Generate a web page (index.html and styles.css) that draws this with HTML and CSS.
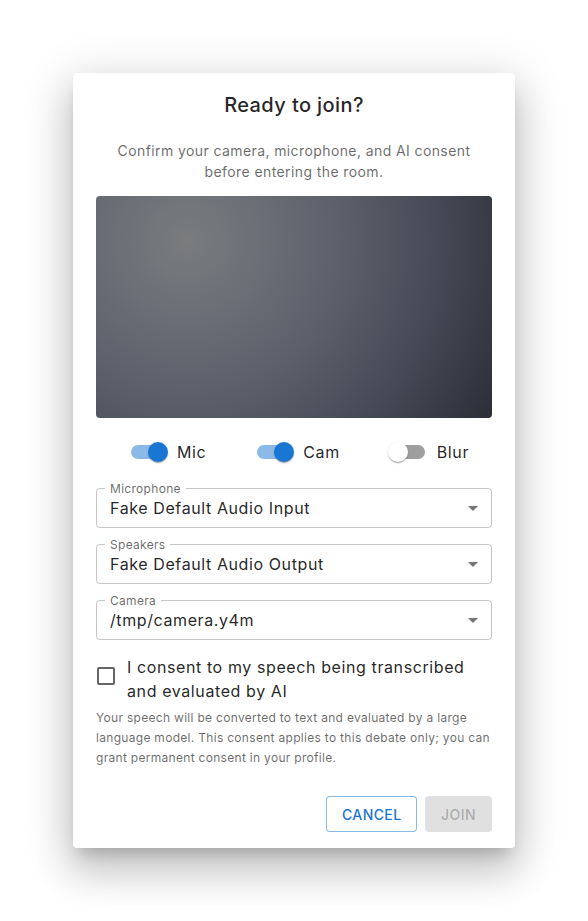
FILE: index.html
```html
<!DOCTYPE html>
<html lang="en">
<head>
<meta charset="utf-8">
<title>Ready to join?</title>
<link rel="stylesheet" href="styles.css">
</head>
<body>
<div class="page">
  <div class="dialog">
    <h2 class="title">Ready to join?</h2>
    <div class="content">
      <p class="subtitle">Confirm your camera, microphone, and AI consent before entering the room.</p>
      <div class="video"></div>
      <div class="toggles">
        <label class="toggle">
          <span class="switch on"><span class="track"></span><span class="thumb"></span></span>
          <span class="toggle-label">Mic</span>
        </label>
        <label class="toggle">
          <span class="switch on"><span class="track"></span><span class="thumb"></span></span>
          <span class="toggle-label">Cam</span>
        </label>
        <label class="toggle">
          <span class="switch"><span class="track"></span><span class="thumb"></span></span>
          <span class="toggle-label">Blur</span>
        </label>
      </div>
      <div class="fields">
        <div class="field">
          <span class="field-label">Microphone</span>
          <span class="field-value">Fake Default Audio Input</span>
          <svg class="arrow" width="10" height="5" viewBox="0 0 10 5"><path d="M0 0L5 5L10 0Z"/></svg>
        </div>
        <div class="field">
          <span class="field-label">Speakers</span>
          <span class="field-value">Fake Default Audio Output</span>
          <svg class="arrow" width="10" height="5" viewBox="0 0 10 5"><path d="M0 0L5 5L10 0Z"/></svg>
        </div>
        <div class="field">
          <span class="field-label">Camera</span>
          <span class="field-value">/tmp/camera.y4m</span>
          <svg class="arrow" width="10" height="5" viewBox="0 0 10 5"><path d="M0 0L5 5L10 0Z"/></svg>
        </div>
      </div>
      <label class="consent">
        <span class="checkbox"></span>
        <span class="consent-text">I consent to my speech being transcribed and evaluated by AI</span>
      </label>
      <p class="helper">Your speech will be converted to text and evaluated by a large language model. This consent applies to this debate only; you can grant permanent consent in your profile.</p>
    </div>
    <div class="actions">
      <button class="btn btn-outlined">Cancel</button>
      <button class="btn btn-disabled" disabled>Join</button>
    </div>
  </div>
</div>
</body>
</html>
```
FILE: styles.css
```css
* { box-sizing: border-box; }
html, body { margin: 0; padding: 0; background: #fff; }
body {
  font-family: "Inter", "Open Sans", sans-serif;
  color: rgba(0, 0, 0, 0.87);
}
.page {
  width: 588px;
  height: 921px;
  display: flex;
  align-items: center;
  justify-content: center;
}
.dialog {
  width: 442px;
  height: 775px;
  background: #fff;
  border-radius: 4px;
  box-shadow: 0 11px 15px -7px rgba(0,0,0,0.2), 0 24px 38px 3px rgba(0,0,0,0.14), 0 9px 46px 8px rgba(0,0,0,0.12);
  display: flex;
  flex-direction: column;
}
.title {
  margin: 0;
  padding: 16px 23px;
  font-size: 20px;
  line-height: 32px;
  font-weight: 500;
  letter-spacing: 0.4px;
  text-align: center;
}
.content {
  padding: 0 23px;
  flex: 1;
}
.subtitle {
  margin: 3px 0 14px;
  font-size: 14px;
  line-height: 21px;
  letter-spacing: 0.4px;
  color: rgba(0,0,0,0.6);
  text-align: center;
  padding: 0 6px;
}
.video {
  height: 222px;
  border-radius: 4px;
  background: radial-gradient(circle at 23% 20%, #7a7c7d 0%, #6a6e76 22%, #5a5f6a 45%, #454955 72%, #2b2e37 100%);
}
.toggles {
  height: 40px;
  margin-top: 14px;
  display: flex;
  align-items: center;
  padding-left: 32px;
}
.toggle {
  display: flex;
  align-items: center;
  gap: 9px;
  font-size: 16px;
  letter-spacing: 0.6px;
}
.toggle + .toggle { margin-left: 48px; }
.switch {
  position: relative;
  width: 40px;
  height: 20px;
  display: block;
}
.track {
  position: absolute;
  left: 3px;
  top: 3px;
  width: 34px;
  height: 14px;
  border-radius: 7px;
  background: #000;
  opacity: 0.38;
}
.thumb {
  position: absolute;
  left: 0;
  top: 0;
  width: 20px;
  height: 20px;
  border-radius: 50%;
  background: #fff;
  box-shadow: 0 2px 1px -1px rgba(0,0,0,0.2), 0 1px 1px 0 rgba(0,0,0,0.14), 0 1px 3px 0 rgba(0,0,0,0.12);
}
.switch.on .track { background: #1976d2; opacity: 0.5; }
.switch.on .thumb { left: 20px; background: #1976d2; }
.fields {
  margin-top: 16px;
  display: flex;
  flex-direction: column;
  gap: 16px;
}
.field {
  position: relative;
  height: 40px;
  border: 1px solid rgba(0,0,0,0.23);
  border-radius: 4px;
  display: flex;
  align-items: center;
  padding: 0 13px;
}
.field-label {
  position: absolute;
  left: 8px;
  top: -8px;
  padding: 0 5px;
  background: #fff;
  font-size: 12px;
  line-height: 15px;
  letter-spacing: 0.3px;
  color: rgba(0,0,0,0.6);
}
.field-value {
  flex: 1;
  font-size: 16px;
  line-height: 23px;
  letter-spacing: 0.6px;
}
.arrow { fill: rgba(0,0,0,0.54); display: block; }
.consent {
  margin-top: 15px;
  display: flex;
  align-items: flex-start;
  gap: 12px;
}
.checkbox {
  flex: none;
  width: 18px;
  height: 18px;
  margin: 12px 0 0 1px;
  border: 2px solid rgba(0,0,0,0.6);
  border-radius: 2px;
}
.consent-text {
  font-size: 16px;
  line-height: 24px;
  letter-spacing: 0.6px;
}
.helper {
  margin: 5px 0 0;
  font-size: 12px;
  line-height: 20px;
  letter-spacing: 0.3px;
  color: rgba(0,0,0,0.6);
}
.actions {
  padding: 0 23px 16px;
  display: flex;
  justify-content: flex-end;
  gap: 8px;
}
.btn {
  height: 36px;
  font-family: inherit;
  font-size: 14px;
  font-weight: 500;
  letter-spacing: 0.4px;
  text-transform: uppercase;
  border-radius: 4px;
  padding: 0 15px;
}
.btn-outlined {
  width: 91px;
  background: #fff;
  color: #1976d2;
  border: 1px solid rgba(25,118,210,0.5);
}
.btn-disabled {
  width: 67px;
  background: rgba(0,0,0,0.12);
  color: rgba(0,0,0,0.26);
  border: none;
}
```
